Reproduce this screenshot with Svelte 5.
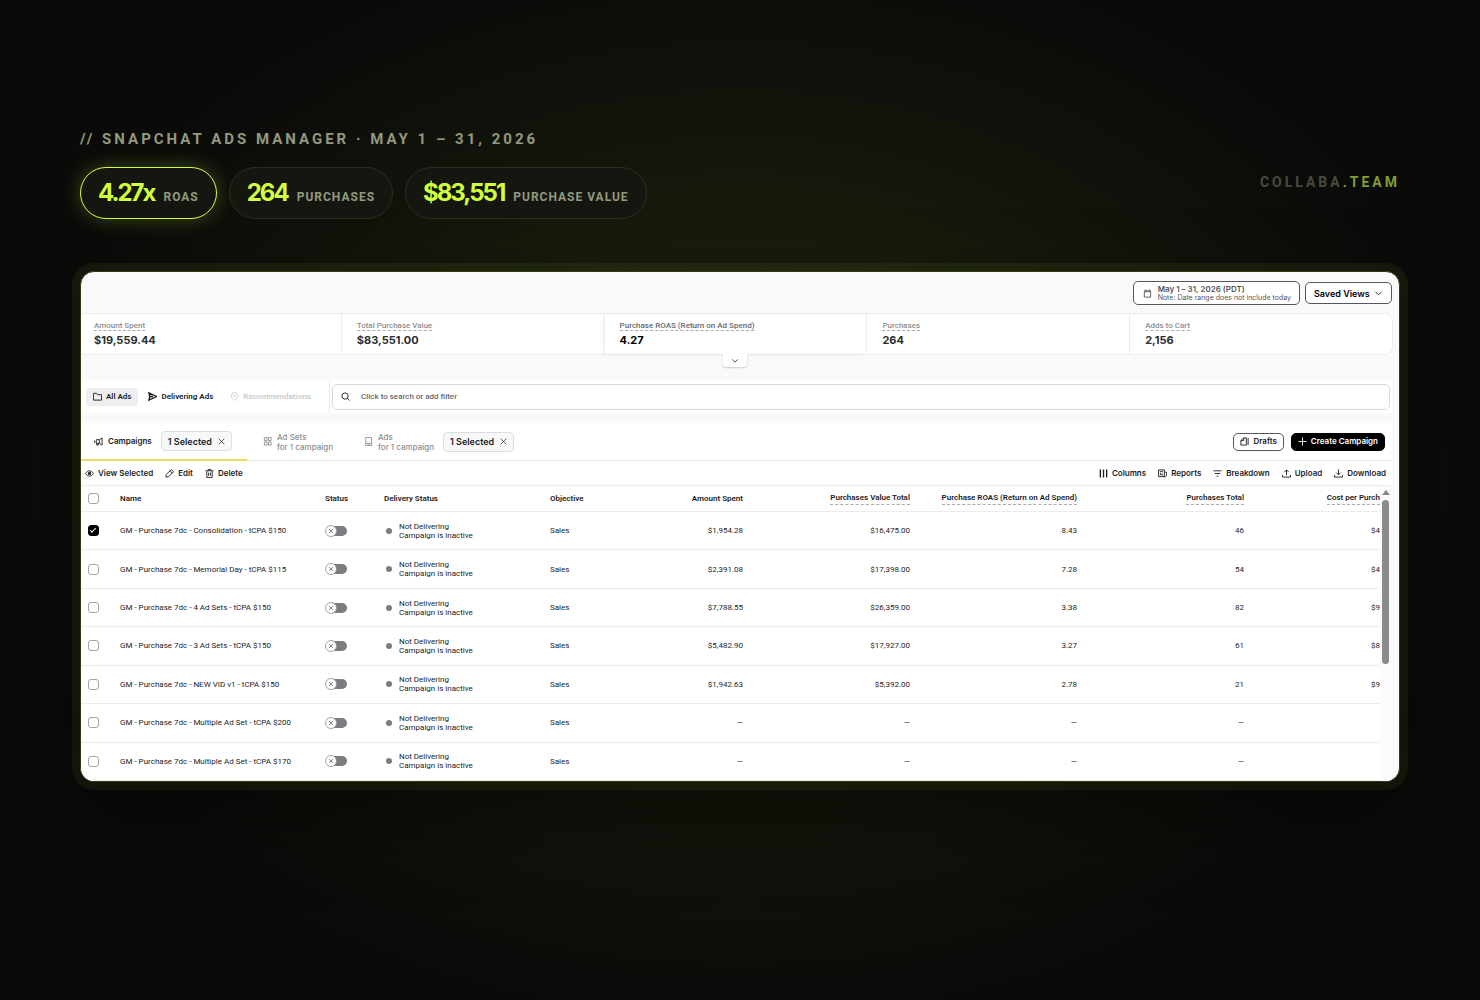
<script>
  const pills = [
    { value: '4.27x', label: 'ROAS', hot: true },
    { value: '264', label: 'PURCHASES' },
    { value: '$83,551', label: 'PURCHASE VALUE' }
  ];

  const stats = [
    { label: 'Amount Spent', value: '$19,559.44' },
    { label: 'Total Purchase Value', value: '$83,551.00' },
    { label: 'Purchase ROAS (Return on Ad Spend)', value: '4.27', active: true },
    { label: 'Purchases', value: '264' },
    { label: 'Adds to Cart', value: '2,156' }
  ];

  const actions = [
    { icon: 'columns', label: 'Columns' },
    { icon: 'reports', label: 'Reports' },
    { icon: 'breakdown', label: 'Breakdown' },
    { icon: 'upload', label: 'Upload' },
    { icon: 'download', label: 'Download' }
  ];

  let rows = $state([
    { name: 'GM - Purchase 7dc - Consolidation - tCPA $150', nums: ['$1,954.28', '$16,475.00', '8.43', '46', '$4'], picked: true },
    { name: 'GM - Purchase 7dc - Memorial Day - tCPA $115', nums: ['$2,391.08', '$17,398.00', '7.28', '54', '$4'], picked: false },
    { name: 'GM - Purchase 7dc - 4 Ad Sets - tCPA $150', nums: ['$7,788.55', '$26,359.00', '3.38', '82', '$9'], picked: false },
    { name: 'GM - Purchase 7dc - 3 Ad Sets - tCPA $150', nums: ['$5,482.90', '$17,927.00', '3.27', '61', '$8'], picked: false },
    { name: 'GM - Purchase 7dc - NEW VID v1 - tCPA $150', nums: ['$1,942.63', '$5,392.00', '2.78', '21', '$9'], picked: false },
    { name: 'GM - Purchase 7dc - Multiple Ad Set - tCPA $200', nums: ['—', '—', '—', '—', ''], picked: false },
    { name: 'GM - Purchase 7dc - Multiple Ad Set - tCPA $170', nums: ['—', '—', '—', '—', ''], picked: false }
  ]);
</script>

<!-- all icons live on a 20-unit grid -->
{#snippet icon(name)}
  <svg class="icon" viewBox="0 0 20 20" aria-hidden="true">
    {#if name === 'calendar'}
      <path d="M3 4h14v14H3zM3 6h14M6 1v3M14 1v3" />
    {:else if name === 'chevron'}
      <path d="M3 6l7 7 7-7" />
    {:else if name === 'folder'}
      <path d="M1 3h7l2 3h9v12H1z" />
    {:else if name === 'send'}
      <path d="M2 2l17 8-17 8 2-8zM4 10h7" stroke-width="3" />
    {:else if name === 'pin'}
      <path d="M10 19c-4-4-7-7-7-11a7 7 0 0114 0c0 4-3 7-7 11z" /><circle cx="10" cy="8" r="2" />
    {:else if name === 'search'}
      <circle cx="9" cy="9" r="7" /><path d="M14 14l5 5" />
    {:else if name === 'horn'}
      <path d="M18 2v16l-6-4H5V6h7zM12 6v8M1 8v5M6 14v4h4v-4" />
    {:else if name === 'grid'}
      <path d="M3 1h6v7H3zM12 1h6v7h-6zM3 11h6v7H3zM12 11h6v7h-6z" />
    {:else if name === 'phone'}
      <path d="M4 1h13v18H4zM4 14h13M8 16h5" />
    {:else if name === 'close'}
      <path d="M2 2l16 16M18 2L2 18" />
    {:else if name === 'drafts'}
      <path d="M8 2h6v16H2V8zM8 2v6H2M18 2v16" />
    {:else if name === 'plus'}
      <path d="M10 1v18M1 10h18" />
    {:else if name === 'eye'}
      <path d="M1 10c5-8 13-8 18 0-5 8-13 8-18 0z" /><circle cx="10" cy="10" r="3" fill="currentColor" />
    {:else if name === 'pencil'}
      <path d="M2 18l1-6L14 1l5 5L8 17zM11 4l5 5" />
    {:else if name === 'trash'}
      <path d="M1 4h18M7 4V1h6v3M4 5v14h12V5M8 8v7M12 8v7" />
    {:else if name === 'columns'}
      <path d="M3 1v18M10 1v18M17 1v18" stroke-width="3" />
    {:else if name === 'reports'}
      <path d="M1 2h13v15H1zM4 6h7M4 10h3M10 10h1M4 13h7M14 7h5v8l-2 2h-5" />
    {:else if name === 'breakdown'}
      <path d="M1 4h18M4 10h12M8 16h4" />
    {:else if name === 'upload'}
      <path d="M10 14V2M5 7l5-5 5 5M1 13v5h18v-5" />
    {:else if name === 'download'}
      <path d="M10 1v12M5 8l5 5 5-5M1 13v5h18v-5" />
    {/if}
  </svg>
{/snippet}

<main>
  <header>
    <div>
      <h1>// SNAPCHAT ADS MANAGER · MAY 1 – 31, 2026</h1>
      <ul class="pills">
        {#each pills as pill}
          <li class:hot={pill.hot}><strong>{pill.value}</strong><span>{pill.label}</span></li>
        {/each}
      </ul>
    </div>
    <p class="brand">COLLABA<b>.TEAM</b></p>
  </header>

  <section class="card">
    <div class="topbar">
      <button class="range">
        {@render icon('calendar')}
        <span><b>May 1 – 31, 2026 (PDT)</b><small>Note: Date range does not include today</small></span>
      </button>
      <div class="saved">
        <select aria-label="Saved Views"><option>Saved Views</option></select>
        {@render icon('chevron')}
      </div>
    </div>

    <div class="stats">
      {#each stats as stat}
        <div class="stat" class:active={stat.active}>
          <span class="hint">{stat.label}</span>
          <strong>{stat.value}</strong>
        </div>
      {/each}
      <button class="expand" aria-label="Expand">{@render icon('chevron')}</button>
    </div>

    <div class="filters">
      <nav>
        <button class="on">{@render icon('folder')}All Ads</button>
        <button>{@render icon('send')}Delivering Ads</button>
        <button disabled>{@render icon('pin')}Recommendations</button>
      </nav>
      <label class="search">
        {@render icon('search')}
        <input type="text" placeholder="Click to search or add filter" />
      </label>
    </div>

    <div class="tabs">
      <div class="tab current">
        <button class="name">{@render icon('horn')}Campaigns</button>
        <button class="chip">1 Selected{@render icon('close')}</button>
      </div>
      <div class="tab">
        <button class="name">{@render icon('grid')}<span>Ad Sets<br />for 1 campaign</span></button>
      </div>
      <div class="tab">
        <button class="name">{@render icon('phone')}<span>Ads<br />for 1 campaign</span></button>
        <button class="chip">1 Selected{@render icon('close')}</button>
      </div>
      <div class="create">
        <button>{@render icon('drafts')}Drafts</button>
        <button class="solid">{@render icon('plus')}Create Campaign</button>
      </div>
    </div>

    <div class="toolbar">
      <div>
        <button>{@render icon('eye')}View Selected</button>
        <button>{@render icon('pencil')}Edit</button>
        <button>{@render icon('trash')}Delete</button>
      </div>
      <div>
        {#each actions as action}
          <button>{@render icon(action.icon)}{action.label}</button>
        {/each}
      </div>
    </div>

    <div class="list">
      <table>
        <thead>
          <tr>
            <th class="c-check"><input type="checkbox" aria-label="Select all" /></th>
            <th>Name</th>
            <th class="c-status">Status</th>
            <th class="c-delivery">Delivery Status</th>
            <th class="c-objective">Objective</th>
            <th class="c-spent num">Amount Spent</th>
            <th class="c-num num"><span class="hint">Purchases Value Total</span></th>
            <th class="c-num num"><span class="hint">Purchase ROAS (Return on Ad Spend)</span></th>
            <th class="c-num num"><span class="hint">Purchases Total</span></th>
            <th class="c-cost num"><span class="hint">Cost per Purch</span></th>
          </tr>
        </thead>
        <tbody>
          {#each rows as row}
            <tr>
              <td><input type="checkbox" aria-label="Select {row.name}" bind:checked={row.picked} /></td>
              <td>{row.name}</td>
              <td>
                <label class="switch">
                  <input type="checkbox" role="switch" aria-label="Status of {row.name}" />
                  <svg viewBox="0 0 22 12" aria-hidden="true">
                    <rect x="4" y="1" width="18" height="10" rx="5" fill="#7b7d80" />
                    <circle cx="6" cy="6" r="5.500" fill="#fff" stroke="#8d8f92" stroke-width="0.800" />
                    <path d="M4 4l4 4M8 4L4 8" stroke="#77797c" stroke-width="0.900" />
                  </svg>
                </label>
              </td>
              <td><div class="delivery"><i></i><span>Not Delivering<br />Campaign is inactive</span></div></td>
              <td>Sales</td>
              {#each row.nums as num}
                <td class="num">{num}</td>
              {/each}
            </tr>
          {/each}
        </tbody>
      </table>
      <div class="scroll" aria-hidden="true"><i class="up"></i><i class="thumb"></i></div>
    </div>
  </section>
</main>

<style>
  :global(body) {
    background: #0a0a09;
  }

  main {
    box-sizing: border-box;
    min-height: 100vh;
    padding: 129px 80px;
    font-family: Roboto, 'Liberation Sans', sans-serif;
    background: radial-gradient(ellipse 50% 54% at 50% 48%, #20250d 0%, #1b1f0c 35%, #11130b 70%, #0a0a09 100%);
  }

  /* ---- headline ---- */
  header {
    display: flex;
    align-items: center;
    justify-content: space-between;
    margin-bottom: 52px;
  }
  h1 {
    margin: 0 0 18px;
    font-size: 15px;
    line-height: 20px;
    font-weight: 700;
    letter-spacing: 3px;
    color: #929a7e;
  }
  .pills {
    display: flex;
    gap: 12px;
    margin: 0;
    padding: 0;
    list-style: none;
  }
  .pills li {
    display: flex;
    align-items: baseline;
    gap: 9px;
    height: 34px;
    padding: 8px 17px;
    border: 1px solid #2b2d20;
    border-radius: 26px;
    background: #151610;
    line-height: 34px;
  }
  .pills li.hot {
    border-color: #d2ff3c;
    box-shadow: 0 0 20px rgba(210, 255, 60, 0.25);
  }
  .pills strong {
    font-family: Inter, sans-serif;
    font-size: 24px;
    letter-spacing: -2px;
    color: #d2ff3c;
  }
  .pills span {
    font-size: 12px;
    font-weight: 700;
    letter-spacing: 1px;
    color: #929a7e;
  }
  .brand {
    margin: 16px 0 0;
    font-size: 14px;
    font-weight: 700;
    letter-spacing: 3px;
    color: #474b3d;
  }
  .brand b {
    font-weight: 700;
    color: #829c35;
  }

  /* ---- card ---- */
  .card {
    overflow: hidden;
    border: 1px solid #303b12;
    border-radius: 14px;
    background: #f9f9f9;
    box-shadow: 0 0 0 8px rgba(210, 255, 60, 0.06), 0 32px 80px rgba(0, 0, 0, 0.5);
    font-size: 8px;
    line-height: 9px;
    color: #1c1d1f;
  }

  button,
  input,
  select {
    margin: 0;
    font: inherit;
    color: inherit;
  }
  button {
    display: flex;
    align-items: center;
    padding: 0;
    border: 0;
    background: none;
    font-weight: 600;
    white-space: nowrap;
    text-align: left;
  }
  .icon {
    flex: none;
    width: 9px;
    height: 9px;
    fill: none;
    stroke: currentColor;
    stroke-width: 2;
  }

  .topbar,
  .tabs,
  .toolbar,
  .stat strong {
    font-family: Inter, 'Liberation Sans', sans-serif;
  }

  .topbar {
    display: flex;
    align-items: center;
    justify-content: flex-end;
    gap: 5px;
    height: 42px;
    padding: 0 7px;
    box-sizing: border-box;
  }
  .range {
    gap: 6px;
    height: 24px;
    padding: 0 8px 0 9px;
    border: 1px solid #55575a;
    border-radius: 5px;
    background: #fff;
    color: #55575a;
  }
  .range b,
  .range small {
    display: block;
    font-size: 8px;
    line-height: 9px;
  }
  .range b {
    font-weight: 600;
  }
  .range small {
    font-size: 7px;
    line-height: 8px;
    font-weight: 400;
  }
  .saved {
    position: relative;
  }
  .saved select {
    appearance: none;
    display: block;
    width: 87px;
    height: 22px;
    padding: 0 8px;
    border: 1px solid #55575a;
    border-radius: 5px;
    background: #fff;
    font-size: 9px;
    font-weight: 600;
    color: #000;
  }
  .saved .icon {
    position: absolute;
    top: 7px;
    right: 9px;
    pointer-events: none;
  }

  /* the first tile starts slightly behind the card edge */
  .stats {
    position: relative;
    display: flex;
    margin: 0 7px 26px -3px;
    border-radius: 8px;
    background: #fff;
    box-shadow: 0 0 0 1px #ececed;
  }
  .stat {
    flex: 1;
    height: 40px;
    padding: 7px 15px 0;
    box-sizing: border-box;
    border-left: 1px solid #ececed;
  }
  .stat .hint {
    color: #8b8e92;
    font-weight: 500;
  }
  .stat strong {
    display: block;
    margin-top: 2px;
    font-size: 11px;
    line-height: 14px;
    color: #2c2d2f;
  }
  .stat.active {
    box-shadow: -2px 0 5px rgba(0, 0, 0, 0.04);
  }
  .stat.active .hint {
    color: #66696d;
  }
  .stat.active strong {
    color: #000;
  }
  .hint {
    display: inline-block;
    border-bottom: 1px dashed #a9abae;
  }
  .expand {
    position: absolute;
    top: 40px;
    left: calc(50% - 12px);
    justify-content: center;
    width: 24px;
    height: 13px;
    border-radius: 0 0 3px 3px;
    background: #fff;
    box-shadow: 0 1px 2px rgba(0, 0, 0, 0.18);
  }
  .expand .icon {
    width: 8px;
    height: 8px;
  }

  .filters {
    display: flex;
    align-items: center;
    height: 33px;
    margin: 0 7px 10px 0;
    background: #fff;
  }
  .filters nav {
    display: flex;
    align-items: center;
    align-self: stretch;
    width: 243px;
    padding-left: 5px;
    border-right: 1px solid #ececed;
  }
  .filters button {
    gap: 4px;
    height: 18px;
    margin-right: 3px;
    padding: 0 7px;
    border-radius: 4px;
  }
  .filters button.on {
    background: #edeef0;
  }
  .filters button:disabled {
    color: #c9cbcd;
  }
  .search {
    flex: 1;
    display: flex;
    align-items: center;
    gap: 11px;
    height: 24px;
    margin: 0 2px;
    padding-left: 8px;
    border: 1px solid #d9dadc;
    border-radius: 5px;
  }
  .search input {
    flex: 1;
    padding: 0;
    border: 0;
    outline: 0;
    background: none;
    font-weight: 500;
  }
  .search input::placeholder {
    color: #66696d;
    opacity: 1;
  }

  .tabs {
    display: flex;
    height: 37px;
    margin-right: 7px;
    border-bottom: 1px solid #e3e4e5;
    background: #fff;
  }
  .tab {
    display: flex;
    align-items: center;
    gap: 9px;
    margin-right: 16px;
    padding-right: 15px;
    color: #8b8e92;
  }
  .tab.current {
    padding-left: 13px;
    border-bottom: 2px solid #f0da5c;
    margin-bottom: -1px;
    color: #1c1d1f;
  }
  .tab .name {
    gap: 5px;
    line-height: 10px;
  }
  .tab span {
    font-weight: 500;
  }
  .chip {
    gap: 6px;
    height: 20px;
    padding: 0 6px;
    border: 1px solid #dcddde;
    border-radius: 4px;
    background: #f8f8f9;
    font-size: 9px;
    color: #1c1d1f;
  }
  .chip .icon {
    width: 7px;
    height: 7px;
  }
  .create {
    display: flex;
    align-items: center;
    gap: 7px;
    margin-left: auto;
    padding-right: 7px;
  }
  .create button {
    gap: 4px;
    height: 18px;
    padding: 0 6px;
    border: 1px solid #55575a;
    border-radius: 5px;
  }
  .create .solid {
    border-color: #000;
    background: #000;
    color: #fff;
  }

  .toolbar {
    display: flex;
    align-items: center;
    justify-content: space-between;
    height: 24px;
    margin-right: 7px;
    padding: 0 6px 0 4px;
    border-bottom: 1px solid #ececed;
    background: #fff;
  }
  .toolbar div {
    display: flex;
    gap: 12px;
  }
  .toolbar button {
    gap: 4px;
  }

  /* ---- campaign list ---- */
  .list {
    display: flex;
  }
  table {
    flex: 1;
    width: 100%;
    height: 295px;
    border-collapse: collapse;
    table-layout: fixed;
    background: #fff;
  }
  th,
  td {
    padding: 0;
    border-bottom: 1px solid #ececed;
    text-align: left;
    white-space: nowrap;
  }
  th {
    height: 25px;
    font-weight: 600;
  }
  .num {
    text-align: right;
  }
  .num .hint {
    padding-bottom: 2px;
  }
  .c-check { width: 39px; }
  .c-status { width: 59px; }
  .c-delivery { width: 166px; }
  .c-objective { width: 110px; }
  .c-spent { width: 83px; }
  .c-num { width: 167px; }
  .c-cost { width: 136px; }

  table input {
    appearance: none;
    display: block;
    box-sizing: border-box;
    width: 11px;
    height: 11px;
    margin-left: 7px;
    border: 1px solid #a3a5a8;
    border-radius: 3px;
    background: #fff;
  }
  table input:checked {
    border-color: #000;
    background: #000;
  }
  table input:checked::after {
    content: '';
    display: block;
    width: 5px;
    height: 2px;
    margin: 2px 1px;
    border: solid #fff;
    border-width: 0 0 1px 1px;
    transform: rotate(-45deg);
  }
  .switch {
    position: relative;
    display: block;
    width: 22px;
    height: 12px;
  }
  .switch input {
    position: absolute;
    inset: 0;
    width: 22px;
    margin: 0;
    opacity: 0;
  }
  .switch svg {
    display: block;
  }
  .delivery {
    display: flex;
    align-items: center;
    gap: 7px;
    padding-left: 2px;
  }
  .delivery i {
    width: 6px;
    height: 6px;
    border-radius: 50%;
    background: #7b7d80;
  }

  .scroll {
    flex: none;
    display: flex;
    flex-direction: column;
    align-items: center;
    gap: 5px;
    width: 11px;
    margin-right: 8px;
    padding-top: 4px;
    background: #fbfbfb;
  }
  .up {
    border: solid transparent;
    border-width: 0 4px 5px;
    border-bottom-color: #85868a;
  }
  .thumb {
    width: 7px;
    height: 164px;
    border-radius: 4px;
    background: #8a8b8d;
  }
</style>
